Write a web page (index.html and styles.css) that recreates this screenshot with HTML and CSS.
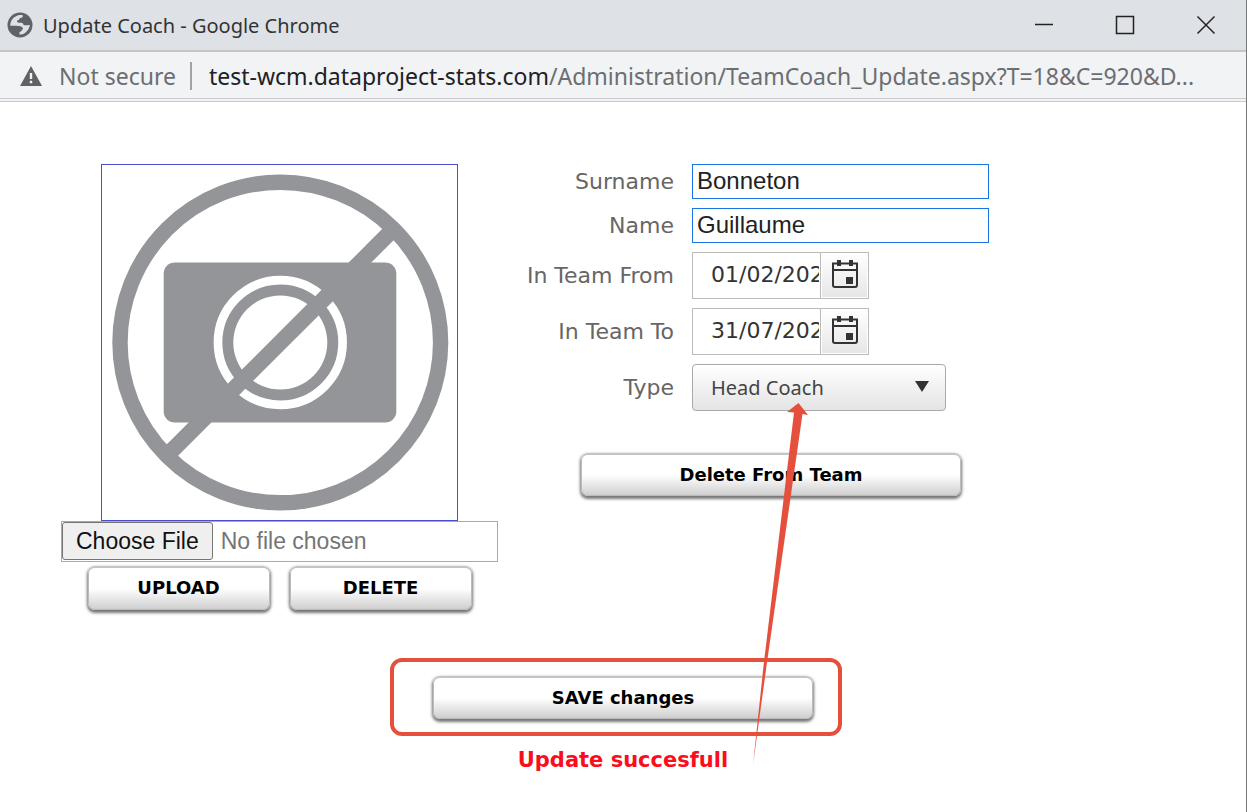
FILE: index.html
```html
<!DOCTYPE html>
<html lang="en">
<head>
<meta charset="utf-8">
<title>Update Coach</title>
<link rel="stylesheet" href="styles.css">
</head>
<body>
<div class="window">
  <header class="titlebar">
    <svg class="globe" viewBox="0 0 26 26" aria-hidden="true">
      <circle cx="13" cy="13" r="12.5" fill="#5f6368"/>
      <path fill="#dee1e6" d="M16 3.400c-.2 1.800-1.400 2.600-3.200 2.600-.2 1.800-1 2.200-2.800 2.400 0 1.500.6 2.200 2 2.300h2.800c1.500.2 1.300 2.400 2.700 2.600 1.700.2 3.600-.4 5.300-.2-.4 3.400-2.200 6-4.800 7.800-1.500 1-3.500 1.700-5.500 1.700v-2.600c1.300-.3 2.300-.8 2.400-2 1.200-.4 1.100-1.600.7-2.400-.7-1-2-1.500-3.800-1.700-2.400-.2-5.500-.2-8.500-.1-.1-4.800 3-8.900 7.300-10.300 1.800-.5 3.600-.5 5.400-.1z"/>
    </svg>
    <span class="window-title">Update Coach - Google Chrome</span>
    <div class="window-controls">
      <button class="control" type="button" aria-label="Minimize"><svg viewBox="0 0 20 20"><path d="M1 9.500h18"/></svg></button>
      <button class="control" type="button" aria-label="Maximize"><svg viewBox="0 0 20 20"><path d="M1.500 1.500h17v17h-17z"/></svg></button>
      <button class="control" type="button" aria-label="Close"><svg viewBox="0 0 20 20"><path d="M1.500 1.500l17 17M18.500 1.500l-17 17"/></svg></button>
    </div>
  </header>
  <div class="addressbar">
    <svg class="warning" viewBox="0 0 22 20" aria-hidden="true"><path fill="#5f6368" d="M11 0l11 20H0z"/><path fill="#f1f3f4" d="M9.800 7h2.400v6H9.800zM9.800 14.800h2.400v2.400H9.800z"/></svg>
    <span class="security">Not secure</span>
    <span class="url"><span class="host">test-wcm.dataproject-stats.com</span>/Administration/TeamCoach_Update.aspx?T=18&amp;C=920&amp;D...</span>
  </div>
  <main class="page">
    <form class="coach-form">
      <section class="photo-column">
        <svg class="photo" viewBox="0 0 355 354" role="img" aria-label="No photo">
          <g fill="none" stroke="#939598">
            <circle cx="178.300" cy="177" r="160.300" stroke-width="15.400"/>
            <path d="M64 291L293 62" stroke-width="16"/>
          </g>
          <rect x="61.700" y="97" width="232.600" height="160" rx="11" fill="#939598"/>
          <circle cx="178.300" cy="177" r="62.300" fill="none" stroke="#fff" stroke-width="8.700"/>
          <circle cx="178.300" cy="177" r="47" fill="#fff"/>
          <path d="M118.300 237L238.300 117" stroke="#939598" stroke-width="16"/>
        </svg>
        <input class="file" type="file" aria-label="Coach photo">
        <div class="photo-actions">
          <button class="btn" type="button">UPLOAD</button>
          <button class="btn" type="button">DELETE</button>
        </div>
      </section>
      <section class="details">
        <div class="row"><label for="surname">Surname</label><input class="text" id="surname" type="text" value="Bonneton"></div>
        <div class="row"><label for="name">Name</label><input class="text" id="name" type="text" value="Guillaume"></div>
        <div class="row"><label for="from">In Team From</label>
          <div class="date"><input id="from" type="text" value="01/02/2021"><button type="button" aria-label="Open calendar for In Team From">
            <svg viewBox="0 0 26 28"><path fill="none" stroke="#333" stroke-width="2" d="M1 3.500h24v21.500q0 2-2 2H3q-2 0-2-2zM1 10h24"/><path fill="#333" d="M5 0h4v6H5zM17 0h4v6h-4zM14 17h7v7h-7z"/></svg></button></div></div>
        <div class="row"><label for="to">In Team To</label>
          <div class="date"><input id="to" type="text" value="31/07/2021"><button type="button" aria-label="Open calendar for In Team To">
            <svg viewBox="0 0 26 28"><path fill="none" stroke="#333" stroke-width="2" d="M1 3.500h24v21.500q0 2-2 2H3q-2 0-2-2zM1 10h24"/><path fill="#333" d="M5 0h4v6H5zM17 0h4v6h-4zM14 17h7v7h-7z"/></svg></button></div></div>
        <div class="row"><label for="type">Type</label>
          <div class="select"><select id="type"><option>Head Coach</option></select><svg viewBox="0 0 14 11" aria-hidden="true"><path fill="#333" d="M0 0h14L7 11z"/></svg></div></div>
        <button class="btn wide remove" type="button">Delete From Team</button>
      </section>
    </form>
    <div class="save-area"><button class="btn wide" type="button">SAVE changes</button></div>
    <p class="status" role="status">Update succesfull</p>
    <svg class="arrow" viewBox="0 0 60 364" aria-hidden="true"><path fill="#e5503c" d="M48.500 0L58 12L52.500 11L16.500 263L3 362L13.500 263L44 9.500L37 9Z"/></svg>
  </main>
</div>
</body>
</html>
```
FILE: styles.css
```css
* { box-sizing: border-box; }

body {
  margin: 0;
  background: #fff;
  font-family: "DejaVu Sans", Verdana, sans-serif;
}

button, input, select { font: inherit; margin: 0; }

.window {
  min-height: 100vh;
  border-right: 1px solid #777;
  overflow: hidden;
}

.titlebar {
  display: flex;
  align-items: center;
  height: 52px;
  padding-left: 7px;
  background: #dee1e6;
  border-bottom: 2px solid #c4c6c8;
  font: 20px "Noto Sans", sans-serif;
  color: #333;
}
.globe { width: 26px; height: 26px; margin-right: 10px; }
.window-title { flex: 1; white-space: nowrap; }
.window-controls { display: flex; }
.control {
  display: grid;
  place-items: center;
  width: 81px;
  height: 50px;
  padding: 0;
  border: 0;
  background: none;
}
.control svg { width: 20px; height: 20px; fill: none; stroke: #222; stroke-width: 1.5; }

.addressbar {
  display: flex;
  align-items: center;
  height: 50px;
  padding: 2px 20px 0;
  background: #f1f3f4;
  border-bottom: 4px double #c8cacd;
  font: 23px "Noto Sans", sans-serif;
  color: #6b6e72;
  white-space: nowrap;
}
.warning { flex: none; width: 22px; height: 20px; margin-right: 17px; }
.security { padding-right: 14px; border-right: 2px solid #a0a3a7; line-height: 28px; }
.url { margin-left: 17px; }
.host { color: #202124; }

.page { position: relative; padding-top: 62px; }

.coach-form {
  display: grid;
  grid-template-columns: 437px 1fr;
  max-width: 1124px;
  margin: 0 auto;
}
.photo-column { display: flex; flex-direction: column; align-items: center; }
.photo { width: 357px; height: 357px; border: 1px solid #4a4fc8; }

.file {
  width: 100%;
  height: 41px;
  border: 1px solid #aaa;
  font: 23px/36px "Liberation Sans", Arial, sans-serif;
  color: #757575;
}
.file::file-selector-button {
  height: 38px;
  margin: 0 8px 0 0;
  padding: 0 13px;
  border: 1px solid #757575;
  border-radius: 3px;
  background: #efefef;
  font: inherit;
  color: #111;
}
.photo-actions { display: flex; gap: 20px; margin-top: 4px; }

.btn {
  width: 182px;
  height: 44px;
  padding: 0 0 2px;
  border: 1px solid #bbb;
  border-top: 2px solid #c4c4c4;
  border-radius: 7px;
  background: linear-gradient(#fff 50%, #cfcfcf);
  box-shadow: 0 2px 3px 1px #777;
  font-size: 18px;
  font-weight: bold;
  color: #000;
}
.btn.wide { width: 380px; height: 43px; }

.details { display: flex; flex-direction: column; gap: 9px; }
.row {
  display: grid;
  grid-template-columns: 176px 1fr;
  gap: 18px;
  align-items: center;
}
.row label { font-size: 22px; line-height: 24px; text-align: right; color: #666; }
.text {
  width: 297px;
  height: 35px;
  padding: 0 4px 2px;
  border: 1px solid #1a73e8;
  font: 24px "Liberation Sans", Arial, sans-serif;
  color: #222;
}
.date {
  display: flex;
  width: 177px;
  height: 47px;
  border: 1px solid #bbb;
}
.date input {
  width: 128px;
  padding: 0 2px 2px 18px;
  border: 0;
  font-size: 22px;
  color: #333;
}
.date button {
  flex: 1;
  display: grid;
  place-items: center;
  padding: 0 0 4px;
  border: 1px solid #fff;
  outline: 1px solid #bbb;
  background: linear-gradient(#fff, #e6e6e6);
}
.date svg { width: 26px; height: 28px; }

.select { position: relative; width: 254px; }
.select select {
  display: block;
  width: 100%;
  height: 47px;
  padding: 0 18px;
  appearance: none;
  border: 1px solid #aaa;
  border-radius: 4px;
  background: linear-gradient(#fff, #e4e4e4);
  font: 20px "Noto Sans", sans-serif;
  color: #444;
}
.select svg { position: absolute; right: 17px; top: 17px; width: 14px; height: 11px; pointer-events: none; }

.remove { margin: 33px 0 0 83px; }

.save-area {
  position: relative;
  width: fit-content;
  margin: 66px auto 0;
}
.save-area .btn { display: block; }
/* highlight ring drawn around the save button */
.save-area::before {
  content: "";
  position: absolute;
  inset: -18px -29px -17px -43px;
  border: 4px solid #e5503c;
  border-radius: 12px;
  pointer-events: none;
}

.status {
  margin: 29px 0 0;
  font-size: 21px;
  line-height: 24px;
  font-weight: bold;
  text-align: center;
  color: #fc0d1b;
}

.arrow {
  position: absolute;
  left: calc(50% + 127px);
  top: 301px;
  width: 60px;
  height: 364px;
  pointer-events: none;
}
```
